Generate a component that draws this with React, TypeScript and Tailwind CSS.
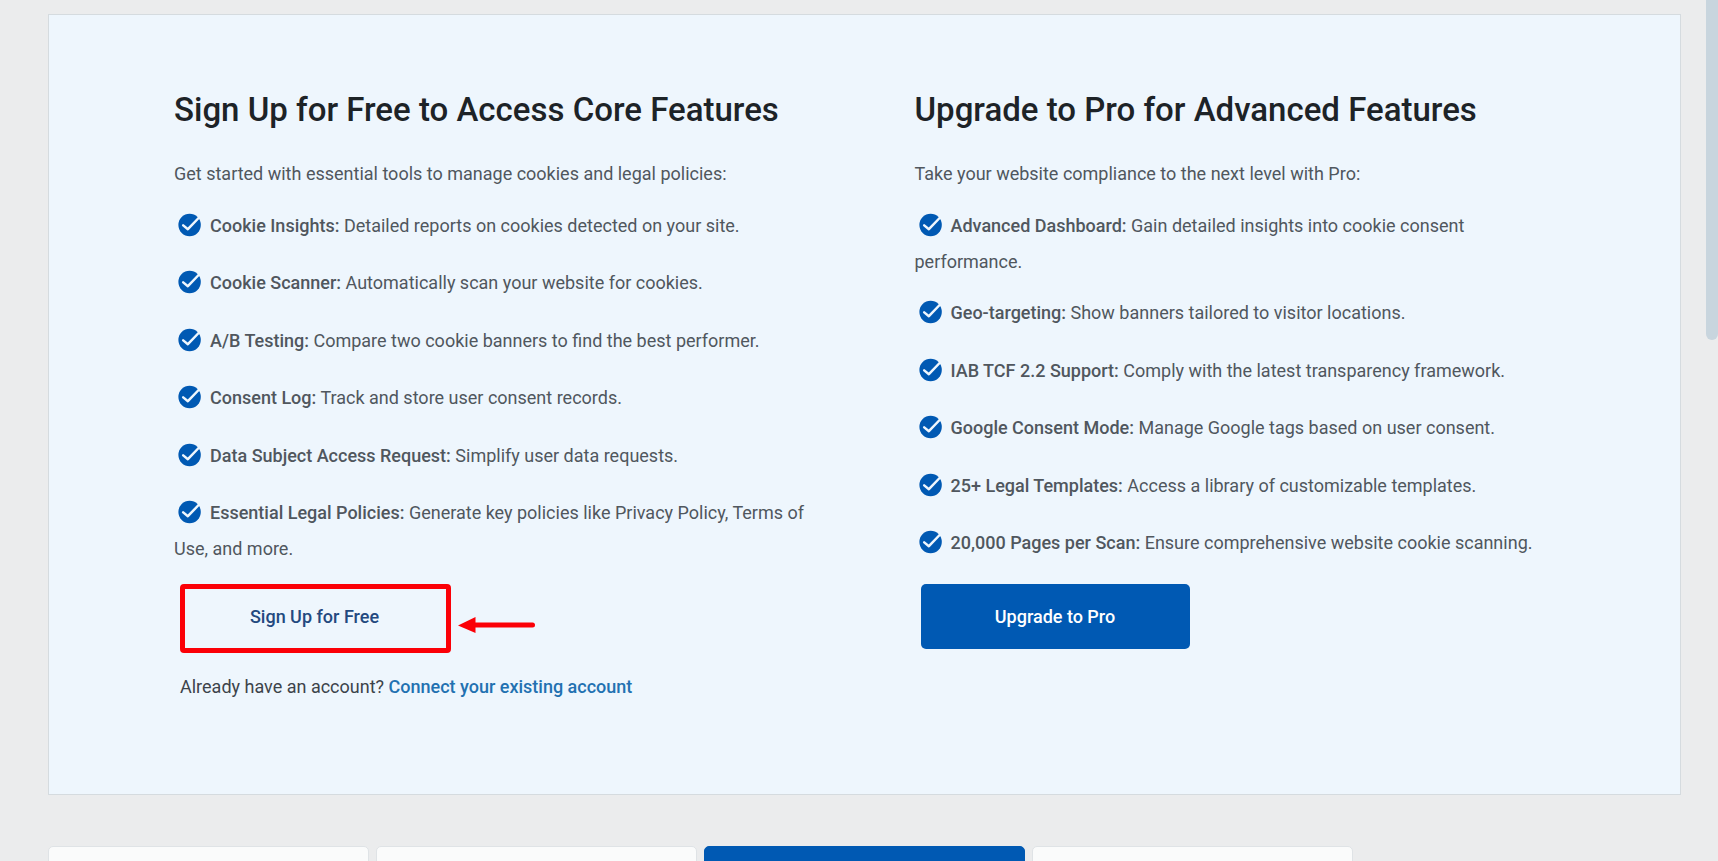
import type { ReactNode } from "react";

type Feature = { name: string; detail: string };

const freeFeatures: Feature[] = [
  { name: "Cookie Insights:", detail: "Detailed reports on cookies detected on your site." },
  { name: "Cookie Scanner:", detail: "Automatically scan your website for cookies." },
  { name: "A/B Testing:", detail: "Compare two cookie banners to find the best performer." },
  { name: "Consent Log:", detail: "Track and store user consent records." },
  { name: "Data Subject Access Request:", detail: "Simplify user data requests." },
  {
    name: "Essential Legal Policies:",
    detail: "Generate key policies like Privacy Policy, Terms of Use, and more.",
  },
];

const proFeatures: Feature[] = [
  { name: "Advanced Dashboard:", detail: "Gain detailed insights into cookie consent performance." },
  { name: "Geo-targeting:", detail: "Show banners tailored to visitor locations." },
  { name: "IAB TCF 2.2 Support:", detail: "Comply with the latest transparency framework." },
  { name: "Google Consent Mode:", detail: "Manage Google tags based on user consent." },
  { name: "25+ Legal Templates:", detail: "Access a library of customizable templates." },
  { name: "20,000 Pages per Scan:", detail: "Ensure comprehensive website cookie scanning." },
];

function CheckIcon() {
  return (
    <span className="mr-2 inline-flex h-9 w-7 items-center justify-end pb-2 align-[-5px]">
      <svg viewBox="0 0 24 24" className="h-6 w-6" aria-hidden="true">
        <circle cx="11.6" cy="12" r="11.2" fill="#0059b3" />
        <path
          d="M5.2 12.4 L9.9 16.2 L20.6 5"
          fill="none"
          stroke="#eef6fd"
          strokeWidth="2.5"
          strokeLinejoin="round"
          strokeLinecap="round"
        />
      </svg>
    </span>
  );
}

function PlanColumn(props: { title: string; intro: string; features: Feature[]; children: ReactNode }) {
  return (
    <section>
      <h2 className="text-[33px] leading-10 font-medium text-[#1d2327]">{props.title}</h2>
      <p className="mt-[29px] text-lg leading-[30px] text-[#50575e]">{props.intro}</p>
      <ul className="mt-[22px] flex min-h-[353px] flex-col justify-between text-lg leading-[30px] text-[#50575e]">
        {props.features.map((f) => (
          <li key={f.name}>
            <CheckIcon />
            <strong className="font-medium">{f.name}</strong> {f.detail}
          </li>
        ))}
      </ul>
      <div className="mt-5 pl-1.5">{props.children}</div>
    </section>
  );
}

export default function App() {
  return (
    <div className="relative h-screen overflow-hidden bg-[#ebeced] pr-[37px] pl-12 font-['Roboto',sans-serif]">
      <main className="pt-3.5">
        <div className="grid grid-cols-2 gap-x-[100px] border border-[#d5dbdf] bg-[#eef6fd] px-[125px] pt-[75px] pb-[92px]">
          <PlanColumn
            title="Sign Up for Free to Access Core Features"
            intro="Get started with essential tools to manage cookies and legal policies:"
            features={freeFeatures}
          >
            <div className="relative w-fit">
              <button type="button" className="h-[65px] w-[269px] rounded-[5px] text-lg font-medium text-[#23497f]">
                Sign Up for Free
              </button>
              <div className="pointer-events-none absolute top-0 -right-0.5 -bottom-1 left-0 rounded-[4px] border-5 border-[#fb0007]" />
              <svg
                viewBox="0 0 78 16"
                className="pointer-events-none absolute top-[33px] left-[278px] h-4 w-[78px]"
                aria-hidden="true"
              >
                <path d="M0 8.6 L17.5 0 V16 Z" fill="#fb0007" />
                <path d="M16 8 H74.5" stroke="#fb0007" strokeWidth="5" strokeLinecap="round" />
              </svg>
            </div>
            <p className="mt-[23px] text-lg leading-[30px] text-[#3c434a]">
              Already have an account?{" "}
              <a href="#connect" className="font-medium text-[#2271b1]">
                Connect your existing account
              </a>
            </p>
          </PlanColumn>
          <PlanColumn
            title="Upgrade to Pro for Advanced Features"
            intro="Take your website compliance to the next level with Pro:"
            features={proFeatures}
          >
            <button
              type="button"
              className="h-[65px] w-[269px] rounded-[5px] bg-[#0059b3] text-lg font-medium text-white"
            >
              Upgrade to Pro
            </button>
          </PlanColumn>
        </div>
        <div className="mt-[51px] flex gap-[7px]">
          <div className="h-40 w-[321px] rounded-[5px] border border-[#dfe3e6] bg-[#fafbfb]" />
          <div className="h-40 w-[321px] rounded-[5px] border border-[#dfe3e6] bg-[#fafbfb]" />
          <div className="h-40 w-[321px] rounded-[5px] border border-[#0059b3] bg-[#0059b3]" />
          <div className="h-40 w-[321px] rounded-[5px] border border-[#dfe3e6] bg-[#fafbfb]" />
        </div>
      </main>
      <div className="absolute top-0 right-0 h-[340px] w-3 rounded-b-full bg-[#c8d5de]" />
    </div>
  );
}
